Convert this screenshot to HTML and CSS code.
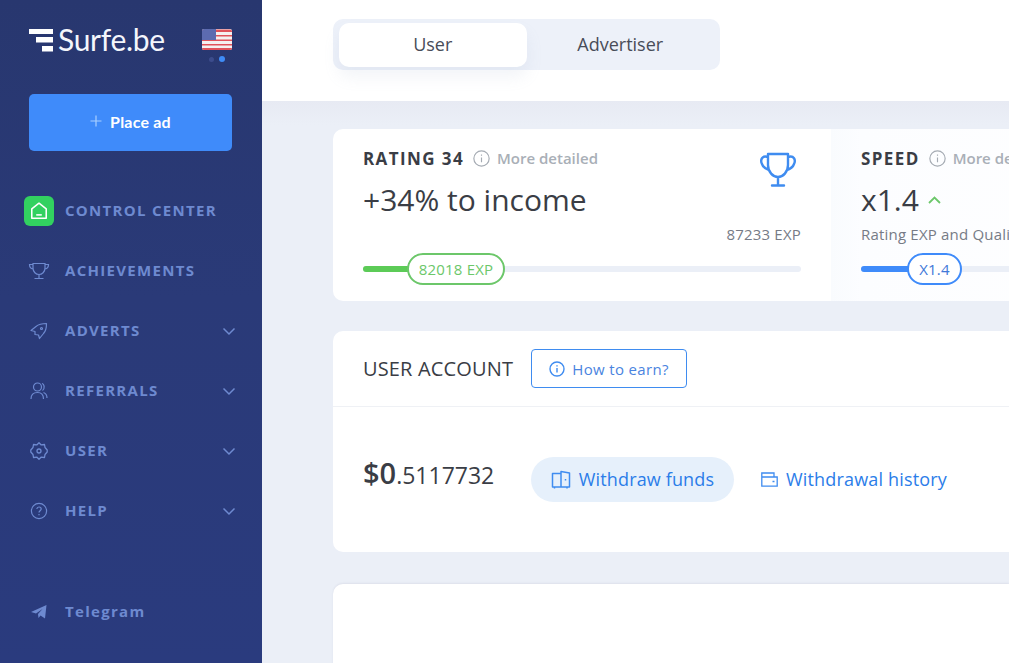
FILE: index.html
```html
<!DOCTYPE html>
<html lang="en">
<head>
<meta charset="utf-8">
<title>Surfe.be</title>
<link rel="stylesheet" href="styles.css">
</head>
<body>
<aside class="sidebar">
  <div class="brand">
    <div class="logo">
      <svg class="logo-mark" width="24" height="23" viewBox="0 0 24 23"><path d="M0 0H24V5H0ZM7 8H24V13.500H7ZM13 17H24V22.500H13Z" fill="#fff"/></svg>
      <span class="logo-text">Surfe.be</span>
    </div>
    <div class="lang">
      <svg class="flag" width="30" height="21" viewBox="0 0 30 21">
        <rect width="30" height="21" rx="2" fill="#f4f0f0"/>
        <path d="M0 2.500a2 2 0 0 1 2-2H28a2 2 0 0 1 2 2V3H0ZM0 6H30V7.500H0ZM0 10.500H30V12H0ZM0 15H30V16.500H0ZM0 19H30a2 2 0 0 1-2 2H2a2 2 0 0 1-2-2Z" fill="#e0525a"/>
        <path d="M0 2a2 2 0 0 1 2-2H14V11H0Z" fill="#5c6bb0"/>
      </svg>
      <div class="dots"><span class="dot"></span><span class="dot dot-on"></span></div>
    </div>
  </div>
  <button class="place-ad"><svg width="12" height="12" viewBox="0 0 12 12"><path d="M6 .5V11.500M.5 6H11.500" stroke="#a9d0ff" stroke-width="1.200"/></svg><span>Place ad</span></button>
  <nav class="nav">
    <a class="nav-item"><span class="nav-icon home"><svg width="20" height="20" viewBox="0 0 18 18" fill="none" stroke="#fff" stroke-width="1.400"><path d="M2.500 15.500V7L9 2l6.500 5v8.500Z" stroke-linejoin="round"/><path d="M6.500 12.500h5"/></svg></span><span class="nav-label">CONTROL CENTER</span></a>
    <a class="nav-item"><span class="nav-icon"><svg width="22" height="18" viewBox="0 0 22 18" fill="none" stroke="#6e8ad0" stroke-width="1.200"><path d="M5 1.500H17V6C17 10 14 12.500 11 12.500S5 10 5 6ZM11 12.500V16.500M6.500 16.500H15.500M5 2.500H1.500C1.500 5 2.500 6.500 5 7M17 2.500H20.500C20.500 5 19.500 6.500 17 7"/></svg></span><span class="nav-label">ACHIEVEMENTS</span></a>
    <a class="nav-item"><span class="nav-icon"><svg width="18" height="18" viewBox="0 0 18 18" fill="none" stroke="#6e8ad0" stroke-width="1.200" stroke-linejoin="round"><path d="M1 8.500 6 4.500C9 2 13 1.500 16.500 1.500 16.500 5 16 9 13.500 11.500L9.500 16.500 8.500 13 5 12.500 5 9.500Z"/><circle cx="11.500" cy="6.500" r="1"/></svg></span><span class="nav-label">ADVERTS</span><svg class="chev" width="14" height="9" viewBox="0 0 14 9" fill="none"><path d="M1.500 1.500 7 7l5.500-5.500" stroke="#6e8ad0" stroke-width="1.500"/></svg></a>
    <a class="nav-item"><span class="nav-icon"><svg width="18" height="18" viewBox="0 0 18 18" fill="none" stroke="#6e8ad0" stroke-width="1.200"><circle cx="7.500" cy="5" r="4"/><path d="M1 17C1 12.500 3.500 10.500 7.500 10.500S13.500 12.500 13.500 17M12 1.500C14.500 2 15 7 12.500 8.500M13.500 10.500C16 11.500 17 13.500 17 16"/></svg></span><span class="nav-label">REFERRALS</span><svg class="chev" width="14" height="9" viewBox="0 0 14 9" fill="none"><path d="M1.500 1.500 7 7l5.500-5.500" stroke="#6e8ad0" stroke-width="1.500"/></svg></a>
    <a class="nav-item"><span class="nav-icon"><svg width="18" height="18" viewBox="0 0 18 18" fill="none" stroke="#6e8ad0" stroke-width="1.300" stroke-linejoin="round"><path d="M9 .8 11 2.800 14.500 2.500 15 5.500 17.200 8 17.200 10 15 12.500 14.500 15.500 11 15.200 9 17.200 7 15.200 3.500 15.500 3 12.500.8 10 .8 8 3 5.500 3.500 2.500 7 2.800Z"/><circle cx="9" cy="9" r="2"/></svg></span><span class="nav-label">USER</span><svg class="chev" width="14" height="9" viewBox="0 0 14 9" fill="none"><path d="M1.500 1.500 7 7l5.500-5.500" stroke="#6e8ad0" stroke-width="1.500"/></svg></a>
    <a class="nav-item"><span class="nav-icon"><svg width="18" height="18" viewBox="0 0 18 18" fill="none" stroke="#6e8ad0" stroke-width="1.200"><circle cx="9" cy="9" r="7.600"/><path d="M6.800 7C7 5.500 8 5 9 5c1.300 0 2.200.8 2.200 2 0 1.700-2.200 1.700-2.200 3.500M9 12v1.200"/></svg></span><span class="nav-label">HELP</span><svg class="chev" width="14" height="9" viewBox="0 0 14 9" fill="none"><path d="M1.500 1.500 7 7l5.500-5.500" stroke="#6e8ad0" stroke-width="1.500"/></svg></a>
  </nav>
  <a class="nav-item telegram"><span class="nav-icon"><svg width="16" height="14" viewBox="0 0 16 14"><path d="M0 7 15.500 0 14 13.500 9.500 10.500 7.500 13 7 9 11.500 4 5 8.500Z" fill="#6e8ad0"/></svg></span><span class="nav-label">Telegram</span></a>
</aside>
<div class="main">
  <header class="topbar">
    <div class="tabs">
      <div class="tab tab-active">User</div>
      <div class="tab">Advertiser</div>
    </div>
  </header>
  <div class="content">
    <section class="stats">
      <div class="stat stat-rating">
        <div class="stat-head"><span class="stat-title">RATING 34</span><svg class="info" width="17" height="17" viewBox="0 0 16 16" fill="none" stroke="#a5abb3" stroke-width="1.100"><circle cx="8" cy="8" r="7.200"/><path d="M8 7v4.500M8 4.300v1.200"/></svg><span class="more">More detailed</span></div>
        <div class="stat-value">+34% to income</div>
        <svg class="cup" width="38" height="36" viewBox="0 0 38 36" fill="none" stroke="#3f8cf0" stroke-width="2.400" stroke-linecap="round" stroke-linejoin="round"><path d="M9 2H29V13C29 20 24 25 19 25S9 20 9 13ZM19 25V33M13 33.500H25M9 5C3 3 1 8 3 12 4 15 7 17 10 18M29 5C35 3 37 8 35 12 34 15 31 17 28 18"/></svg>
        <div class="stat-note right">87233 EXP</div>
        <div class="track"><div class="fill fill-green"></div><div class="pill pill-green">82018 EXP</div></div>
      </div>
      <div class="stat stat-speed">
        <div class="stat-head"><span class="stat-title">SPEED</span><svg class="info" width="17" height="17" viewBox="0 0 16 16" fill="none" stroke="#a5abb3" stroke-width="1.100"><circle cx="8" cy="8" r="7.200"/><path d="M8 7v4.500M8 4.300v1.200"/></svg><span class="more">More detailed</span></div>
        <div class="stat-value">x1.4<svg class="up" width="13" height="8" viewBox="0 0 13 8" fill="none"><path d="M1 7 6.500 1.500 12 7" stroke="#6cc76a" stroke-width="1.800"/></svg></div>
        <div class="stat-note">Rating EXP and Quality EXP</div>
        <div class="track"><div class="fill fill-blue"></div><div class="pill pill-blue">X1.4</div></div>
      </div>
    </section>
    <section class="card account">
      <div class="card-head">
        <h2 class="card-title">USER ACCOUNT</h2>
        <a class="earn"><svg width="16" height="16" viewBox="0 0 16 16" fill="none" stroke="#3f8cf0" stroke-width="1.400"><circle cx="8" cy="8" r="7"/><path d="M8 7v4.500M8 4.200v1.300"/></svg>How to earn?</a>
      </div>
      <div class="card-body">
        <div class="balance"><span class="big">$0</span>.5117732</div>
        <a class="withdraw"><svg width="20" height="20" viewBox="0 0 20 20" fill="none" stroke="#3f8cf0" stroke-width="1.500" stroke-linejoin="round"><path d="M1.500 3.500H10V17H1.500ZM10 3.500 10 1.500 18.500 3V17H10M14.500 9v1.500M3.500 17v1.500M16 17v1.500"/></svg><span>Withdraw funds</span></a>
        <a class="history"><svg width="17" height="15" viewBox="0 0 17 15" fill="none" stroke="#3f8cf0" stroke-width="1.300"><path d="M.8 5H16.200V14.200H.8ZM.8 5V1H13V5M11.500 9.500H13.500"/></svg><span>Withdrawal history</span></a>
      </div>
    </section>
    <section class="card empty"></section>
  </div>
</div>
</body>
</html>
```
FILE: styles.css
```css
* { box-sizing: border-box; }
html, body { height: 100%; }
body {
  margin: 0;
  display: flex;
  height: 663px;
  overflow: hidden;
  font-family: "Open Sans", "Liberation Sans", sans-serif;
  color: #3a3d45;
  background: #ebeff7;
}
.sidebar {
  width: 262px;
  flex: none;
  display: flex;
  flex-direction: column;
  padding: 28px 29px 0;
  background: linear-gradient(180deg, #28376f 0%, #2a3a78 45%, #2a3b7e 100%);
}
.brand { display: flex; justify-content: space-between; align-items: flex-start; height: 66px; }
.logo { display: flex; align-items: flex-start; gap: 5px; }
.logo-mark { margin-top: 1px; }
.logo-text {
  font-family: Lato, "Open Sans", sans-serif;
  font-size: 30px;
  font-weight: 400;
  line-height: 25px;
  color: #f4f6fc;
  letter-spacing: -0.3px;
  margin-top: -1px;
}
.lang { display: flex; flex-direction: column; align-items: center; gap: 6px; width: 30px; margin-right: 1px; margin-top: 1px; }
.flag { display: block; }
.dots { display: flex; gap: 5px; align-items: center; }
.dot { width: 5px; height: 5px; border-radius: 50%; background: #3c4c8c; }
.dot-on { width: 6px; height: 6px; background: #3f8cf7; }
.place-ad {
  width: 203px;
  height: 57px;
  flex: none;
  border: 0;
  border-radius: 5px;
  background: #3f8bfa;
  color: #fff;
  display: flex;
  align-items: center;
  justify-content: center;
  gap: 8px;
  padding-bottom: 4px;
  font-family: Lato, sans-serif;
  font-weight: 700;
  font-size: 16px;
  letter-spacing: .2px;
}
.nav { display: flex; flex-direction: column; margin-top: 30px; margin-left: -5px; }
.nav-item {
  height: 60px;
  display: flex;
  align-items: center;
  width: 212px;
  color: #6e8ad0;
}
.nav-icon { width: 30px; height: 30px; margin-right: 11px; flex: none; display: flex; align-items: center; justify-content: center; }
.home { background: #32d160; border-radius: 6px; }
.nav-label { font-size: 15px; font-weight: 700; letter-spacing: 1.3px; flex: 1; line-height: 20px; padding-bottom: 2px; }
.chev { flex: none; }
.telegram { margin-top: 41px; margin-left: -5px; }
.main { flex: 1; min-width: 0; display: flex; flex-direction: column; }
.topbar {
  height: 101px;
  flex: none;
  background: #fff;
  padding: 19px 0 0 71px;
}
.tabs {
  width: 387px;
  height: 51px;
  display: flex;
  align-items: stretch;
  padding: 4px 6px 3px;
  border-radius: 10px;
  background: #edf1f9;
}
.tab { width: 187.500px; display: flex; align-items: center; justify-content: center; font-size: 18px; font-weight: 500; color: #484c58; padding-bottom: 3px; }
.tab-active { background: #fff; border-radius: 10px; box-shadow: 0 10px 16px rgba(150, 165, 200, .12); }
.content {
  flex: 1;
  padding: 28px 0 0 71px;
  display: flex;
  flex-direction: column;
  gap: 30px;
  background: linear-gradient(180deg, #e7eaf3 0, #ebeff7 24px);
  overflow: hidden;
}
.stats { display: flex; width: 900px; height: 172px; flex: none; border-radius: 10px; overflow: hidden; background: #fff; }
.stat { position: relative; padding: 18px 30px 0; height: 172px; }
.stat-rating { width: 498px; }
.stat-speed { flex: 1; background: linear-gradient(90deg, #f9fbfe, #fcfdff 30px, #fff); }
.stat-head { display: flex; align-items: center; height: 22px; }
.stat-title { font-size: 17px; font-weight: 700; letter-spacing: 1.4px; color: #3a3d45; }
.info { margin: 0 7px 0 9px; flex: none; }
.more { font-size: 15px; font-weight: 600; color: #a9afb7; }
.stat-value { font-size: 30px; line-height: 40px; margin-top: 11px; color: #3a3d45; display: flex; align-items: center; }
.up { margin-left: 9px; }
.cup { position: absolute; top: 23px; right: 34px; }
.stat-note { font-size: 15px; font-weight: 500; letter-spacing: .2px; color: #767b86; line-height: 20px; margin-top: 4px; white-space: nowrap; }
.right { text-align: right; }
.track { position: absolute; left: 30px; right: 30px; top: 137px; height: 6px; border-radius: 3px; background: #ebeff7; }
.stat-speed .track { right: auto; width: 400px; }
.fill { position: absolute; left: 0; top: 0; height: 6px; border-radius: 3px; }
.fill-green { width: 50px; background: #5ccb57; }
.fill-blue { width: 50px; background: #3f8bfa; }
.pill {
  position: absolute;
  top: -13px;
  height: 32px;
  background: #fff;
  border-radius: 16px;
  font-size: 15px;
  font-weight: 500;
  letter-spacing: .2px;
  display: flex;
  align-items: center;
  justify-content: center;
}
.pill-green { left: 44px; width: 98px; border: 2px solid #6cc76a; color: #6cc76a; }
.pill-blue { left: 46px; width: 55px; border: 2px solid #3f8bfa; color: #4178d8; }
.card { background: #fff; border-radius: 10px 0 0 10px; width: 676px; flex: none; }
.account { height: 221px; }
.card-head { height: 76px; display: flex; align-items: center; padding: 0 30px 0 31px; border-bottom: 1px solid #eff1f5; }
.card-title { margin: 0 0 0 -1px; font-size: 20px; font-weight: 500; letter-spacing: .15px; color: #3a3d45; }
.earn {
  margin-left: 18px;
  width: 156px;
  height: 39px;
  border: 1px solid #3f8cf0;
  border-radius: 4px;
  display: flex;
  align-items: center;
  justify-content: center;
  gap: 7px;
  font-size: 15px;
  font-weight: 500;
  letter-spacing: .35px;
  color: #4a84e0;
}
.card-body { display: flex; align-items: center; padding: 50px 0 0 30px; }
.balance { width: 168px; font-size: 23px; font-weight: 400; color: #3a3d45; line-height: 34px; margin-top: -11px; }
.big { font-size: 29px; font-weight: 600; }
.withdraw {
  width: 203px;
  height: 45px;
  border-radius: 23px;
  background: #e6f0fb;
  display: flex;
  align-items: center;
  justify-content: center;
  gap: 8px;
  font-size: 18px;
  font-weight: 500;
  letter-spacing: .15px;
  color: #2b7de9;
}
.withdraw span, .history span { padding-bottom: 2px; }
.history { margin-left: 27px; display: flex; align-items: center; gap: 8px; font-size: 18px; font-weight: 500; letter-spacing: .17px; color: #2b7de9; }
.empty { height: 200px; margin-top: 2px; box-shadow: 0 -1px 2px rgba(60, 70, 100, .08); }
```
